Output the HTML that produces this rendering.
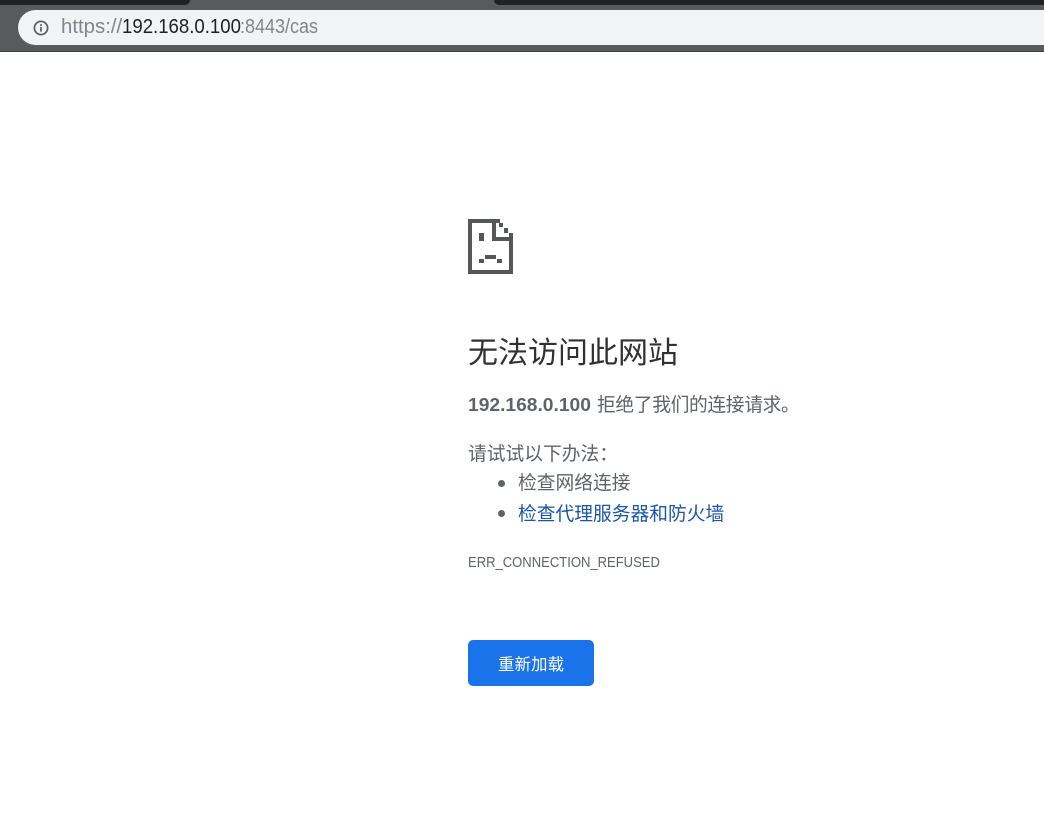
<!DOCTYPE html>
<html lang="zh-CN">
<head>
<meta charset="utf-8">
<title>无法访问此网站</title>
<style>
html,body{margin:0;padding:0;background:#fff;}
body{width:1044px;height:834px;position:relative;overflow:hidden;font-family:"Liberation Sans","Noto Sans CJK SC",sans-serif;color:#5f6368;}
.abs{position:absolute;white-space:nowrap;}
#bar{left:0;top:0;width:1044px;height:52px;background:#595a5c;}
#tabL{left:0;top:0;width:190px;height:5px;background:#202124;border-radius:0 0 8px 0;}
#tabR{left:494px;top:0;width:550px;height:5px;background:#202124;border-radius:0 0 0 6px;}
#line{left:0;top:51px;width:1044px;height:1px;background:#3c3d3f;}
#omni{left:18px;top:10px;width:1026px;height:35px;background:#f1f3f4;border-radius:18px 0 0 18px;}
.u{top:15px;font-size:20px;line-height:25px;color:#80868b;transform-origin:0 50%;}
h1{margin:0;font-weight:normal;left:468px;top:334px;font-size:30px;line-height:40px;color:#303134;}
.p{font-size:18.75px;line-height:28px;}
a{color:#1a55a8;text-decoration:none;}
.dot{width:7px;height:7px;border-radius:50%;background:#5f6368;}
#btn{left:468px;top:640px;width:126px;height:46px;background:#1a73e8;border-radius:5px;color:#fff;font-size:16.5px;line-height:50px;text-align:center;}
</style>
</head>
<body>
<div class="abs" id="bar"></div>
<div class="abs" id="tabL"></div>
<div class="abs" id="tabR"></div>
<div class="abs" id="line"></div>
<div class="abs" id="omni"></div>
<svg class="abs" style="left:32px;top:19px" width="18" height="18" viewBox="0 0 18 18">
<circle cx="9" cy="9" r="6.6" fill="none" stroke="#5f6368" stroke-width="1.8"/>
<rect x="8.1" y="8" width="1.8" height="4.6" fill="#5f6368"/>
<rect x="8.1" y="5.2" width="1.8" height="1.8" fill="#5f6368"/>
</svg>
<div class="abs u" style="left:61px;transform:scaleX(1.02)">https://</div>
<div class="abs u" style="left:122px;color:#202124;transform:scaleX(.93)">192.168.0.100</div>
<div class="abs u" style="left:240px;transform:scaleX(.9)">:8443/cas</div>

<svg class="abs" style="left:468px;top:219px" width="46" height="55" viewBox="0 0 46 55" shape-rendering="crispEdges" fill="#555658">
<rect x="0" y="0" width="32" height="4"/>
<rect x="0" y="0" width="4" height="55"/>
<rect x="0" y="51" width="45" height="4"/>
<rect x="41" y="14" width="4" height="41"/>
<rect x="24" y="0" width="4" height="22"/>
<rect x="24" y="18" width="21" height="4"/>
<rect x="31" y="4" width="4" height="4"/>
<rect x="36" y="9" width="4" height="5"/>
<rect x="11" y="14" width="5" height="8"/>
<rect x="17" y="36" width="11" height="4"/>
<rect x="11" y="40" width="5" height="4"/>
<rect x="29" y="40" width="5" height="4"/>
</svg>

<h1 class="abs">无法访问此网站</h1>
<div class="abs p" style="left:468px;top:391px;transform:scaleX(1.025);transform-origin:0 50%"><strong>192.168.0.100</strong></div>
<div class="abs p" style="left:597px;top:391px;letter-spacing:-.35px">拒绝了我们的连接请求。</div>
<div class="abs p" style="left:468px;top:440px">请试试以下办法：</div>
<div class="abs dot" style="left:498px;top:480px"></div>
<div class="abs p" style="left:518px;top:469px">检查网络连接</div>
<div class="abs dot" style="left:498px;top:510px"></div>
<div class="abs p" style="left:518px;top:500px"><a href="#">检查代理服务器和防火墙</a></div>
<div class="abs" style="left:468px;top:553px;font-size:14.6px;line-height:20px;transform:scaleX(.893);transform-origin:0 50%">ERR_CONNECTION_REFUSED</div>
<div class="abs" id="btn">重新加载</div>
</body>
</html>
